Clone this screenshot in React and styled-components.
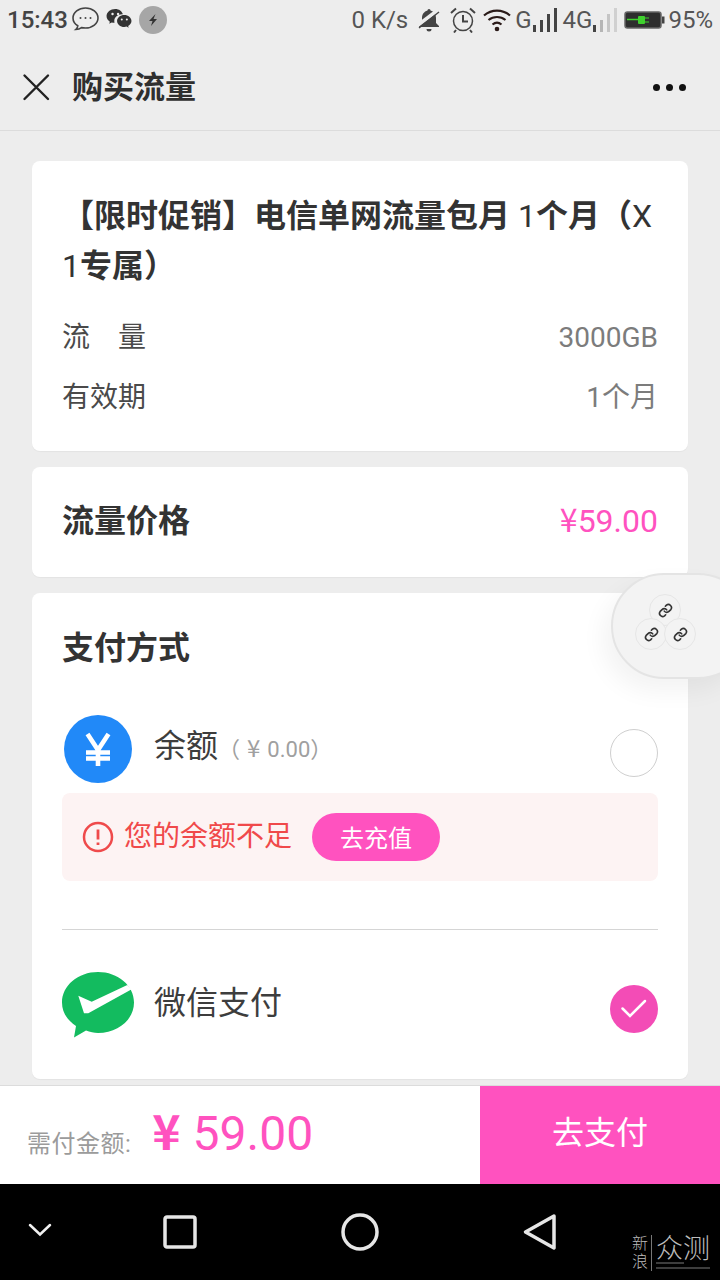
import React from "react";
import styled, { createGlobalStyle } from "styled-components";

const Global = createGlobalStyle`
  html, body { margin: 0; padding: 0; background: #ededed; }
  * { box-sizing: border-box; }
  body { font-family: Roboto, "Noto Sans CJK SC", sans-serif; }
`;
const Page = styled.div`
  position: relative; width: 720px; height: 1280px; overflow: hidden;
  display: flex; flex-direction: column; background: #ededed; color: #333;
`;
const StatusBar = styled.div`
  height: 44px; flex: none; display: flex; align-items: center; justify-content: space-between;
  padding: 0 7px 4px 7px; color: #444;
`;
const StatusGroup = styled.div`display: flex; align-items: center;`;
const StatusTime = styled.span`font-size: 24px; font-weight: 500; color: #444; margin-right: 3px;`;
const StatusText = styled.span`font-size: 24px; color: #555; margin-right: ${p => p.$mr || 0}px; margin-left: ${p => p.$ml || 0}px;`;
const NavHeader = styled.div`
  height: 87px; flex: none; display: flex; align-items: center; padding: 0 34px 0 22px;
  border-bottom: 1px solid #dcdcdc;
`;
const NavTitle = styled.h1`margin: 0 0 0 22px; font-size: 31px; font-weight: 700; color: #2f2f2f; flex: 1; line-height: 1;`;
const Dots = styled.div`display: flex; gap: 6px;`;
const Dot = styled.i`width: 7px; height: 7px; border-radius: 50%; background: #111; display: block;`;
const Content = styled.div`
  flex: 1; min-height: 0; padding: 30px 32px 0; display: flex; flex-direction: column; gap: 16px; overflow: hidden;
`;
const Card = styled.section`
  background: #fff; border-radius: 8px; padding: ${p => p.$pad || "0 30px"}; height: ${p => p.$h}px; flex: none;
  box-shadow: 0 1px 1px rgba(0,0,0,.04);
`;
const Title = styled.h2`margin: 0; font-size: 32px; font-weight: 700; line-height: 50px; color: #333;`;
const Latin = styled.span`font-weight: 400;`;
const InfoRow = styled.div`
  display: flex; justify-content: space-between; align-items: center; height: 60px; font-size: 28px; color: #4a4a4a;
`;
const InfoLabel = styled.span`padding-bottom: 4px;`;
const InfoValue = styled.span`color: #7c7c7c; padding-bottom: ${p => p.$cjk ? 4 : 0}px;`;
const PriceCard = styled(Card)`display: flex; align-items: center; justify-content: space-between;`;
const PriceLabel = styled.span`font-size: 32px; font-weight: 700; color: #333; padding-bottom: 8px;`;
const PriceValue = styled.span`font-size: 32px; line-height: 40px; color: #ff52bf; padding-bottom: 6px;`;
const Yen = styled.span`font-family: "Noto Sans CJK SC", sans-serif; font-weight: ${p => p.$w || 400};`;
const PayHeading = styled.h2`margin: 0; font-size: 32px; font-weight: 700; line-height: 50px; color: #333;`;
const MethodRow = styled.div`
  display: flex; align-items: flex-start; height: ${p => p.$h}px; margin-top: ${p => p.$top || 0}px; padding-top: ${p => p.$pt || 0}px;
`;
const MethodLabel = styled.span`font-size: 32px; color: #3d3d3d; line-height: 40px; margin-left: ${p => p.$ml}px; margin-top: ${p => p.$mt}px;`;
const MethodSub = styled.span`font-size: 22px; color: #a0a0a0;`;
const SubYen = styled.span`font-family: "Noto Sans CJK SC", sans-serif; font-size: 24px; margin: 0 7px;`;
const Radio = styled.div`
  margin-left: auto; margin-top: ${p => p.$mt}px; width: 48px; height: 48px; border-radius: 50%; flex: none;
  border: ${p => p.$on ? "0" : "1px solid #cfcfcf"}; background: ${p => p.$on ? "#f34cb6" : "#fff"};
  display: flex; align-items: center; justify-content: center;
`;
const Alert = styled.div`
  height: 88px; background: #fdf3f3; border-radius: 8px; display: flex; align-items: center; padding: 0 20px;
  margin: 0 0 48px;
`;
const AlertText = styled.span`font-size: 28px; color: #f0494a; margin-left: 10px; padding-bottom: 7px;`;
const Recharge = styled.span`
  margin-left: 20px; width: 128px; height: 48px; border-radius: 24px; background: #ff52bf; color: #fff;
  font-size: 24px; display: flex; align-items: center; justify-content: center; padding-bottom: 2px;
`;
const Divider = styled.hr`margin: 0; border: 0; border-top: 1px solid #d5d5d5;`;
const BottomBar = styled.div`
  height: 99px; flex: none; display: flex; background: #fff; border-top: 1px solid #dcdcdc;
`;
const Total = styled.div`flex: 1; display: flex; align-items: flex-start; padding: 0 0 0 27px;`;
const TotalLabel = styled.span`font-size: 24px; letter-spacing: .5px; color: #9b9b9b; line-height: 40px; margin-top: 38px;`;
const TotalAmount = styled.span`font-size: 48px; color: #ff52bf; margin-left: 21px; line-height: 60px; margin-top: 13px;`;
const PayButton = styled.div`
  width: 240px; background: #ff52bf; color: #fff; font-size: 32px; display: flex; align-items: center; justify-content: center;
  padding-bottom: 10px;
`;
const SystemBar = styled.div`
  position: relative; height: 96px; flex: none; background: #000; display: grid;
  grid-template-columns: 80px 200px 160px 200px 80px; align-items: center; justify-items: center;
`;
const Watermark = styled.div`
  position: absolute; left: 632px; top: 51px; display: flex; align-items: stretch; color: #bcbcbc; height: 36px;
`;
const WmSmall = styled.div`font-size: 16px; line-height: 18px; width: 16px; font-weight: 300;`;
const WmBig = styled.div`
  font-size: 27px; line-height: 28px; margin-left: 3px; padding-left: 4px; width: 59px; border-left: 1px solid #777; position: relative;
  font-weight: 300;
`;
const WmLine = styled.div`position: absolute; left: 4px; width: ${p => p.$w}px; top: ${p => p.$top}px; height: 2px; background: #3d3d3d;`;
const Floating = styled.div`
  position: absolute; left: 611px; top: 573px; width: 140px; height: 106px; border-radius: 53px;
  background: #f3f3f3; border: 2px solid #e4e4e4; box-shadow: -8px 12px 24px rgba(0,0,0,.05);
`;
const LinkBall = styled.div`
  position: absolute; left: ${p => p.$x}px; top: ${p => p.$y}px; width: 32px; height: 32px; border-radius: 50%;
  border: 1px solid #e6e6e6; background: #f3f3f3; display: flex; align-items: center; justify-content: center; color: #333;
`;

const LinkIcon = () => (
  <svg width="15" height="15" viewBox="0 0 24 24" fill="none" stroke="currentColor" strokeWidth="2.6" strokeLinecap="round" strokeLinejoin="round">
    <path d="M10 13a5 5 0 0 0 7.5.5l3-3a5 5 0 0 0-7-7l-1.7 1.7" />
    <path d="M14 11a5 5 0 0 0-7.5-.5l-3 3a5 5 0 0 0 7 7l1.7-1.7" />
  </svg>
);

export default function App() {
  return (
    <Page>
      <Global />
      <StatusBar>
        <StatusGroup>
          <StatusTime>15:43</StatusTime>
          <svg width="29" height="28" viewBox="0 0 29 28" fill="none" stroke="#444" strokeWidth="1.6">
            <path d="M14.5 2C7.6 2 2 6.5 2 12c0 3.2 1.9 6 4.8 7.8 0 1.3-.8 2.7-2 3.7 2.5 0 4.4-.8 5.7-1.9 1.3.3 2.6.4 4 .4 6.9 0 12.5-4.500 12.5-10S21.4 2 14.5 2Z" />
            <circle cx="9.5" cy="12" r="1" fill="#444" stroke="none" /><circle cx="14.5" cy="12" r="1" fill="#444" stroke="none" /><circle cx="19.5" cy="12" r="1" fill="#444" stroke="none" />
          </svg>
          <svg width="26" height="24" viewBox="0 0 28 26" style={{ marginLeft: 6 }}>
            <path d="M10 1C4.7 1 .5 4.4.5 8.8c0 2.5 1.4 4.6 3.6 6L3.4 17l2.700-1.400c1 .3 2 .5 3.100.5-.2-.7-.3-1.300-.3-2 0-4 3.700-7.200 8.500-7.200h.8C17.300 3.400 14 1 10 1Z" fill="#333" />
            <path d="M27.500 14c0-3.600-3.500-6.500-7.800-6.500S11.900 10.400 11.900 14s3.500 6.500 7.800 6.500c.9 0 1.700-.1 2.500-.4l2.300 1.300-.6-2c2.200-1.300 3.600-3.200 3.600-5.400Z" fill="#333" />
            <circle cx="7" cy="6.500" r="1.300" fill="#ededed" /><circle cx="13" cy="6.500" r="1.300" fill="#ededed" />
            <circle cx="17" cy="12.500" r="1.100" fill="#ededed" /><circle cx="22.500" cy="12.500" r="1.100" fill="#ededed" />
          </svg>
          <svg width="28" height="28" viewBox="0 0 28 28" style={{ marginLeft: 7 }}>
            <circle cx="14" cy="14" r="14" fill="#a6a6a6" />
            <path d="M16.500 8 10 15h3.500l-1.500 5 6-7h-3.500Z" fill="#333" />
          </svg>
        </StatusGroup>
        <StatusGroup>
          <StatusText $mr={9}>0 K/s</StatusText>
          <svg width="24" height="26" viewBox="0 0 24 26" fill="#444">
            <path d="M12 2c1 0 1.500.8 1.500 1.500C17 4.500 19 7.500 19 11v5l3 3v1H2v-1l3-3v-5c0-3.500 2-6.500 5.500-7.500C10.500 2.800 11 2 12 2Z" />
            <path d="M9.500 22h5a2.500 2.500 0 0 1-5 0Z" />
            <path d="M1 18 21 3" stroke="#ededed" strokeWidth="3.500" /><path d="M2 21 22 5" stroke="#444" strokeWidth="1.500" />
          </svg>
          <svg width="28" height="26" viewBox="0 0 28 26" fill="none" stroke="#444" strokeWidth="1.500" style={{ marginLeft: 8 }}>
            <circle cx="14" cy="14" r="9.500" /><path d="M14 8v6.500h5" strokeWidth="2" />
            <path d="M2 6 7 1.500M26 6l-5-4.500M7 23l-2 2.500M21 23l2 2.500" strokeWidth="2" />
          </svg>
          <svg width="28" height="24" viewBox="0 0 28 24" fill="none" stroke="#2a1a18" strokeWidth="2.200" style={{ marginLeft: 6 }}>
            <path d="M1 7.500C8.500 1 19.500 1 27 7.500" /><path d="M5.500 12c5-4 12-4 17 0" /><path d="M9.500 16.500c2.800-2.200 6.200-2.200 9 0" />
            <circle cx="14" cy="21" r="2.300" fill="#2a1a18" stroke="none" />
          </svg>
          <StatusText $ml={4}>G</StatusText>
          <svg width="26" height="26" viewBox="0 0 26 26" fill="#444">
            <rect x="1" y="18" width="3" height="7" /><rect x="8" y="13" width="3" height="12" /><rect x="15" y="7" width="3" height="18" /><rect x="22" y="1" width="3" height="24" />
          </svg>
          <StatusText $ml={5}>4G</StatusText>
          <svg width="26" height="26" viewBox="0 0 26 26">
            <rect x="1" y="18" width="3" height="7" fill="#444" /><rect x="8" y="13" width="3" height="12" fill="#b5b5b5" /><rect x="15" y="7" width="3" height="18" fill="#c5c5c5" /><rect x="22" y="1" width="3" height="24" fill="#d0d0d0" />
          </svg>
          <svg width="41" height="18" viewBox="0 0 41 18" style={{ marginLeft: 6 }}>
            <rect x="1" y="1" width="36" height="16" rx="2.500" fill="#2e2e2e" stroke="#666" strokeWidth="1.500" />
            <rect x="38" y="5.500" width="2.500" height="7" fill="#444" />
            <path d="M3 8.500h13" stroke="#3fd12e" strokeWidth="1.500" />
            <rect x="14" y="5" width="7" height="8" rx="1" fill="#3fd12e" /><path d="M21 7h4M21 11h4" stroke="#3fd12e" strokeWidth="1.200" />
          </svg>
          <StatusText $ml={3}>95%</StatusText>
        </StatusGroup>
      </StatusBar>

      <NavHeader>
        <svg width="28" height="28" viewBox="0 0 28 28" stroke="#222" strokeWidth="2.400" strokeLinecap="round">
          <path d="M2.500 2.500 26 26M26 2.500 2.500 26" />
        </svg>
        <NavTitle>购买流量</NavTitle>
        <Dots><Dot /><Dot /><Dot /></Dots>
      </NavHeader>

      <Content>
        <Card $h={290} $pad="30px 30px 0 30px">
          <Title>【限时促销】电信单网流量包月 <Latin>1</Latin>个月（<Latin>X 1</Latin>专属）</Title>
          <div style={{ height: 16 }} />
          <InfoRow><InfoLabel>流　量</InfoLabel><InfoValue>3000GB</InfoValue></InfoRow>
          <InfoRow><InfoLabel>有效期</InfoLabel><InfoValue $cjk>1个月</InfoValue></InfoRow>
        </Card>
        <PriceCard $h={110} $pad="0 30px">
          <PriceLabel>流量价格</PriceLabel>
          <PriceValue><Yen>¥</Yen>59.00</PriceValue>
        </PriceCard>
        <Card $h={486} $pad="30px 30px 0 30px">
          <PayHeading>支付方式</PayHeading>
          <MethodRow $h={78} $top={42}>
            <svg width="68" height="68" viewBox="0 0 68 68" style={{ flex: "none", marginLeft: 2 }}>
              <circle cx="34" cy="34" r="34" fill="#2189f8" />
              <path d="M23.500 19 34 35l10.500-16M22 37.500h24M22 43.500h24M34 35v16" fill="none" stroke="#fff" strokeWidth="4.600" />
            </svg>
            <MethodLabel $ml={22} $mt={11}>余额<MethodSub>（<SubYen>¥</SubYen>0.00）</MethodSub></MethodLabel>
            <Radio $mt={14} />
          </MethodRow>
          <Alert>
            <svg width="32" height="32" viewBox="0 0 32 32" fill="none" stroke="#ef4a4b" strokeWidth="2.500">
              <circle cx="16" cy="16" r="14" />
              <path d="M16 8.500v10M16 21.500v2.500" strokeWidth="2.800" />
            </svg>
            <AlertText>您的余额不足</AlertText>
            <Recharge>去充值</Recharge>
          </Alert>
          <Divider />
          <MethodRow $h={120} $pt={42}>
            <svg width="72" height="66" viewBox="0 0 72 66" style={{ flex: "none" }}>
              <path d="M36 0C16 0 0 13.600 0 30.500 0 40 5 48 14 54l-2 11.500L24 58.500c4 1.500 8 2.500 12 2.500 20 0 36-13.500 36-30.500S56 0 36 0Z" fill="#13bb5f" />
              <path d="M16.300 23.700 29.700 29.700 65.300 13 69.700 17.300 26.300 41.300 22 41.300Z" fill="#fff" />
            </svg>
            <MethodLabel $ml={20} $mt={11}>微信支付</MethodLabel>
            <Radio $on $mt={13}>
              <svg width="28" height="22" viewBox="0 0 28 22" fill="none" stroke="#fff" strokeWidth="2.500" strokeLinecap="round">
                <path d="M2.500 10.500 10 18 25 3" />
              </svg>
            </Radio>
          </MethodRow>
        </Card>
      </Content>

      <BottomBar>
        <Total>
          <TotalLabel>需付金额:</TotalLabel>
          <TotalAmount><Yen $w={700}>¥</Yen> 59.00</TotalAmount>
        </Total>
        <PayButton>去支付</PayButton>
      </BottomBar>

      <SystemBar>
        <svg width="24" height="14" viewBox="0 0 24 14" fill="none" stroke="#f0f0f0" strokeWidth="2.500" strokeLinecap="round" style={{ marginBottom: 4 }}>
          <path d="M2 2 12 11.500 22 2" />
        </svg>
        <svg width="34" height="34" viewBox="0 0 34 34" fill="none" stroke="#e6e6e6" strokeWidth="3.500">
          <rect x="2" y="2" width="30" height="30" rx="2" />
        </svg>
        <svg width="38" height="38" viewBox="0 0 38 38" fill="none" stroke="#e6e6e6" strokeWidth="3.500">
          <circle cx="19" cy="19" r="17" />
        </svg>
        <svg width="34" height="38" viewBox="0 0 34 38" fill="none" stroke="#e6e6e6" strokeWidth="3.500" strokeLinejoin="round">
          <path d="M31 3 2.500 19 31 35Z" />
        </svg>
        <span />
        <Watermark>
          <WmSmall>新浪</WmSmall>
          <WmBig>众测<WmLine $w={28} $top={27} /><WmLine $w={54} $top={32} /></WmBig>
        </Watermark>
      </SystemBar>

      <Floating>
        <LinkBall $x={36} $y={19}><LinkIcon /></LinkBall>
        <LinkBall $x={22} $y={43}><LinkIcon /></LinkBall>
        <LinkBall $x={51} $y={43}><LinkIcon /></LinkBall>
      </Floating>
    </Page>
  );
}
